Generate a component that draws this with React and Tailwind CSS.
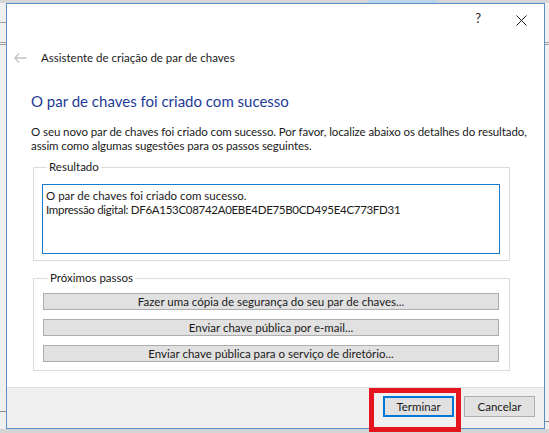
import React from 'react';

const font = "font-['Lato',sans-serif]";

const GroupBox = ({ title, className = '', children }) => (
  <fieldset className={`border border-[#dcdcdc] mx-[26px] w-[477px] ${className}`}>
    <legend className="ml-[5px] px-[2px] text-[11.5px] leading-[14px] text-[#1a1a1a]">{title}</legend>
    {children}
  </fieldset>
);

const StepButton = ({ children }) => (
  <button className="h-[17px] w-[456px] border border-[#adadad] bg-[#e1e1e1] text-[11.5px] leading-[15px] text-[#1a1a1a]">
    {children}
  </button>
);

const App = () => {
  return (
    <div className={`relative w-[549px] h-[433px] overflow-hidden bg-[#f0f0f0] ${font}`}>
      {/* desktop behind the dialog */}
      <div className="absolute left-0 top-0 w-full h-[3px] bg-[#d6d6d6]" />
      <div className="absolute left-[368px] top-0 w-[69px] h-[3px] bg-[#bcd3ec]" />
      <div className="absolute left-0 top-[22px] w-[6px] h-px bg-[#a0a0a0]" />
      <div className="absolute left-0 top-[42px] w-[6px] h-px bg-[#a0a0a0]" />
      <div className="absolute left-0 top-[44px] w-[6px] h-px bg-[#a0a0a0]" />
      <div className="absolute right-0 top-[42px] w-[4px] h-px bg-[#a0a0a0]" />
      <div className="absolute right-0 top-[44px] w-[4px] h-px bg-[#a0a0a0]" />
      <div className="absolute left-0 top-[411px] w-[6px] h-px bg-[#8c8c8c]" />
      <div className="absolute right-0 top-[421px] w-[4px] h-px bg-[#8c8c8c]" />
      <div className="absolute left-0 top-[429px] w-full h-[4px] bg-[#d4d4d4]" />

      {/* dialog window */}
      <div className="relative ml-[6px] mt-[3px] w-[539px] h-[426px] border border-[#5b8ec6] bg-white flex flex-col">
        <div className="h-[30px] flex items-center justify-end text-[#1a1a1a]">
          <span className="text-[13px] mr-[35px]">?</span>
          <svg width="11" height="11" viewBox="0 0 11 11" className="mr-[17px] mt-[2px]">
            <path d="M0.5 0.5 L10.5 10.5 M10.5 0.5 L0.5 10.5" stroke="#1a1a1a" strokeWidth="1" />
          </svg>
        </div>

        <div className="h-[48px] flex items-center">
          <svg width="13" height="10" viewBox="0 0 13 10" className="ml-[7px]">
            <path d="M5 0.5 L0.8 5 L5 9.5 M0.8 5 H12.5" stroke="#c2c2c2" strokeWidth="1.3" fill="none" />
          </svg>
          <span className="ml-[14px] text-[11.5px] text-[#1a1a1a]">Assistente de criação de par de chaves</span>
        </div>

        <div className="flex-1 flex flex-col">
          <h1 className="mt-[8px] ml-[24px] text-[15px] leading-[22px] text-[#1e3b96]">
            O par de chaves foi criado com sucesso
          </h1>
          <p className="mt-[13px] ml-[24px] text-[11.5px] leading-[14px] tracking-[-0.08px] text-[#1a1a1a] whitespace-nowrap">
            O seu novo par de chaves foi criado com sucesso. Por favor, localize abaixo os detalhes do resultado,
            <br />
            assim como algumas sugestões para os passos seguintes.
          </p>

          <GroupBox title="Resultado" className="mt-[7px] pl-[8px] pr-[9px] pb-[6px] pt-[10px]">
            <div className="h-[70px] border border-[#1979ca] px-[3px] py-[4px] text-[11.5px] leading-[14px] text-[#1a1a1a]">
              O par de chaves foi criado com sucesso.
              <br />
              <span className="tracking-[-0.3px]">Impressão digital: DF6A153C08742A0EBE4DE75B0CD495E4C773FD31</span>
            </div>
          </GroupBox>

          <GroupBox title="Próximos passos" className="mt-[10px] pl-[9px] pr-[9px] pb-[8px] pt-[8px]">
            <div className="flex flex-col gap-[9px]">
              <StepButton>Fazer uma cópia de segurança do seu par de chaves...</StepButton>
              <StepButton>Enviar chave pública por e-mail...</StepButton>
              <StepButton>Enviar chave pública para o serviço de diretório...</StepButton>
            </div>
          </GroupBox>
        </div>

        <div className="h-[41px] border-t border-[#dfdfdf] bg-[#f0f0f0] flex justify-end gap-[10px] pr-[9px] pt-[8px]">
          <button className="h-[21px] w-[71px] border-2 border-[#0078d7] bg-[#e1e1e1] text-[11.5px] text-[#1a1a1a]">
            Terminar
          </button>
          <button className="h-[21px] w-[71px] border border-[#adadad] bg-[#e1e1e1] text-[11.5px] text-[#1a1a1a]">
            Cancelar
          </button>
        </div>
      </div>

      {/* highlight annotation */}
      <div className="absolute left-[369px] top-[388px] w-[92px] h-[44px] border-[5px] border-[#e5141e]" />
    </div>
  );
};

export default App;
